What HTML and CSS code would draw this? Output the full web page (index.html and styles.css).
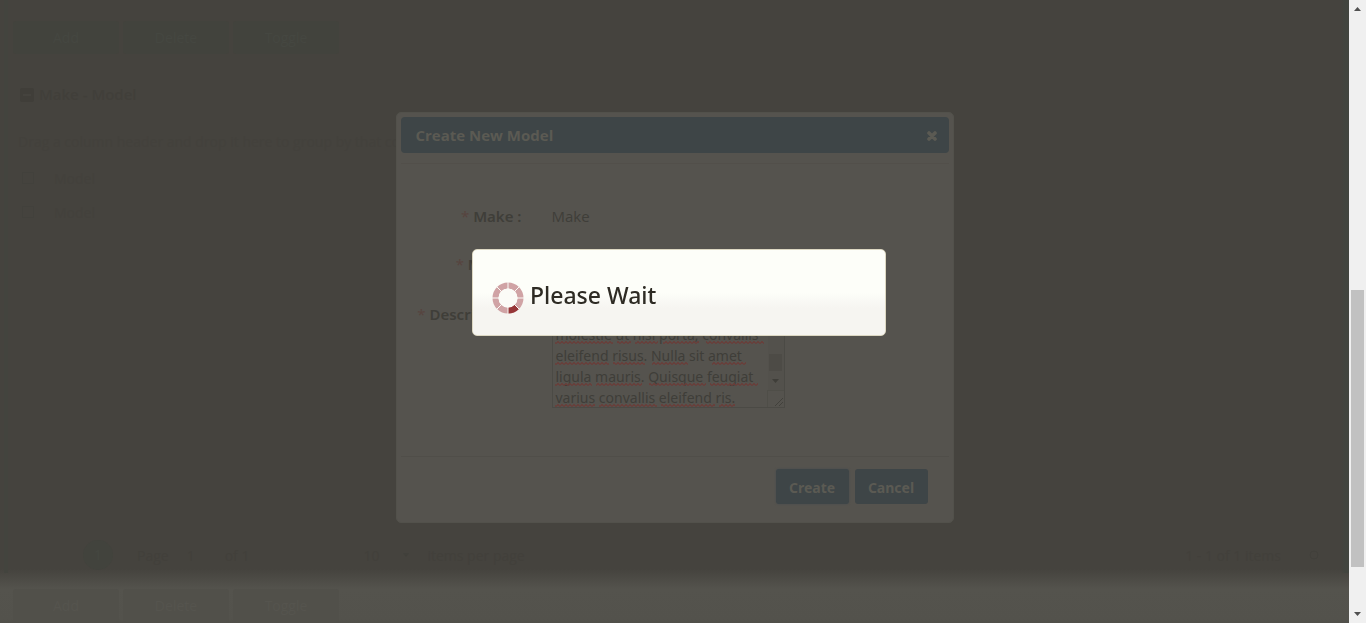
FILE: index.html
```html
<!DOCTYPE html>
<html lang="en">
<head>
<meta charset="utf-8">
<title>Create New Model</title>
<link rel="stylesheet" href="styles.css">
</head>
<body>
<div class="window">
  <main class="page">
    <div class="toolbar">
      <button class="tool" type="button">Add</button>
      <button class="tool" type="button">Delete</button>
      <button class="tool" type="button">Toggle</button>
    </div>
    <h2 class="section-title">
      <svg width="14" height="14" viewBox="0 0 14 14" aria-hidden="true"><rect width="14" height="14" rx="2" fill="#403e39"/><path d="M3 7h8" stroke="#45433e" stroke-width="2"/></svg>
      Make - Model
    </h2>
    <p class="group-hint">Drag a column header and drop it here to group by that column</p>
    <div class="grid-row"><input type="checkbox" aria-label="Select all"><span>Model</span></div>
    <div class="grid-row"><input type="checkbox" aria-label="Select row"><span>Model</span></div>
    <div class="pager">
      <span class="current">1</span>
      <label class="page-label" for="page">Page</label>
      <input class="page-input" id="page" value="1">
      <span class="total">of 1</span>
      <span class="size">10</span>
      <svg class="size-arrow" width="6" height="4" viewBox="0 0 6 4" aria-hidden="true"><path fill="#41403b" d="M0 0h6L3 4z"/></svg>
      <span class="per-page">items per page</span>
      <span class="items">1 - 1 of 1 items</span>
      <svg class="refresh" width="10" height="10" viewBox="0 0 10 10" aria-hidden="true"><circle cx="5" cy="5" r="4" fill="none" stroke="#41403b"/></svg>
    </div>
    <div class="toolbar lower">
      <button class="tool" type="button">Add</button>
      <button class="tool" type="button">Delete</button>
      <button class="tool" type="button">Toggle</button>
    </div>

    <section class="modal" role="dialog" aria-labelledby="modal-title">
      <header class="modal-head">
        <h1 id="modal-title">Create New Model</h1>
        <button class="close" type="button" aria-label="Close"><svg width="10" height="10" viewBox="0 0 10 10" aria-hidden="true"><path d="M2 2l6 6M8 2l-6 6" stroke="#5b5a53" stroke-width="3.600" stroke-linecap="round"/></svg></button>
      </header>
      <form class="form">
        <div class="field"><span class="label"><i>*</i> Make :</span><span class="value">Make</span></div>
        <div class="field"><label class="label" for="model"><i>*</i> Model :</label><input class="text" id="model"></div>
        <div class="field tall"><label class="label" for="description"><i>*</i> Description :</label>
          <div class="area">
            <textarea id="description" spellcheck="false">molestie ut nisi porta, convallis
eleifend risus. Nulla sit amet
ligula mauris. Quisque feugiat
varius convallis eleifend ris.</textarea>
            <svg class="marks" viewBox="0 0 233 106" aria-hidden="true">
              <defs><pattern id="wave" width="4" height="3" patternUnits="userSpaceOnUse"><path d="M0 2.5L2 .5L4 2.5" fill="none" stroke="#6b3c38" stroke-width="1.200"/></pattern></defs>
              <g fill="url(#wave)">
                <path d="M3 39h58v3H3zM65 39h14v3H65zM83 39h23v3H83zM111 39h36v3h-36zM154 39h58v3h-58z"/>
                <path d="M3 60h54v3H3zM61 60h32v3H61zM100 60h36v3h-36zM160 60h34v3h-34z"/>
                <path d="M3 81h37v3H3zM44 81h46v3H44zM97 81h57v3H97zM158 81h48v3h-48z"/>
                <path d="M3 102h40v3H3zM47 102h58v3H47zM109 102h54v3h-54zM167 102h16v3h-16z"/>
              </g>
            </svg>
            <svg class="area-scroll" width="18" height="106" viewBox="0 0 18 106" aria-hidden="true"><path fill="#53514c" d="M1 1h16v88H1z"/><path fill="#4d4b46" d="M2 52h13v17H2z"/><path fill="#3f3e39" d="M5 77h7l-3.500 4z"/><path d="M1 88.500h16M.5 88v17" fill="none" stroke="#4f4e48"/><path d="M8 104l8-8M12 104l4-4" fill="none" stroke="#42413c"/></svg>
          </div>
        </div>
      </form>
      <footer class="modal-foot">
        <button class="action focused" type="button">Create</button>
        <button class="action" type="button">Cancel</button>
      </footer>
    </section>
  </main>

  <div class="scrollbar" aria-hidden="true">
    <svg width="17" height="17" viewBox="0 0 17 17"><path fill="#505050" d="M5 11h7L8.500 7z"/></svg>
    <div class="track"><div class="thumb"></div></div>
    <svg width="17" height="17" viewBox="0 0 17 17"><path fill="#505050" d="M5 6h7l-3.500 4z"/></svg>
  </div>
</div>

<div class="wait" role="status">
  <svg width="32" height="32" viewBox="0 0 32 32" aria-hidden="true">
    <circle cx="16" cy="16" r="12.500" fill="none" stroke="#d0a3a5" stroke-width="6"/>
    <path d="M16 28.500A12.500 12.500 0 0 0 24.840 24.840" fill="none" stroke="#963638" stroke-width="6"/>
    <path d="M16 0v32M0 16h32M4.500 4.500l23 23M27.500 4.500l-23 23" stroke="#fbfaf6"/>
    <circle cx="16" cy="16" r="9.500" fill="#fbfbf7"/>
  </svg>
  <span>Please Wait</span>
</div>
</body>
</html>
```
FILE: styles.css
```css
* { box-sizing: border-box; }
body { margin: 0; font: 15px/21px "Open Sans", "Noto Sans", sans-serif; color: #3f3e39; background: #45433e; }
button, input, textarea { font: inherit; color: inherit; }
.window { display: flex; height: 100vh; overflow: hidden; }
.page {
  position: relative; flex: 1; display: flex; flex-direction: column; padding: 21px 10px 0 13px; overflow: hidden;
  background:
    linear-gradient(90deg, transparent 4px, #43443e 4px, #43443e 8px, transparent 8px) 0 0 / 100% calc(100% - 50px) no-repeat,
    linear-gradient(270deg, #42453f 4px, transparent 8px) 0 0 / 100% calc(100% - 50px) no-repeat,
    linear-gradient(0deg, #504f49 0, #53524c 4px, #54534d 34px, #45433e 54px);
}
.toolbar { display: flex; gap: 4px; }
.tool { width: 106px; height: 33px; padding: 0; border: 0; border-radius: 3px; background: #42433d; color: #454741; font-size: 14px; }
.lower { height: 34px; margin-top: 19px; }
.lower .tool { background: #51504a; color: #55544e; }
.section-title { display: flex; align-items: center; gap: 5px; margin: 30px 0 0 7px; font-size: 15px; font-weight: 600; color: #413f3a; line-height: 21px; }
.group-hint { margin: 26px 0 9px 5px; color: #43413c; font-size: 14px; }
.grid-row { display: flex; align-items: center; gap: 20px; height: 34px; margin-left: 9px; color: #43413c; font-size: 14px; }
.grid-row input { appearance: none; width: 12px; height: 12px; margin: 0; border: 1px solid #42413c; }
.pager { display: flex; align-items: center; height: 30px; margin-top: auto; padding-left: 70px; color: #42403b; font-size: 14px; }
.current { width: 30px; height: 30px; border-radius: 50%; background: #42433d; text-align: center; line-height: 30px; color: #454741; }
.page-label { margin-left: 24px; }
.page-input { width: 30px; margin-left: 14px; padding: 0 4px; border: 0; background: transparent; }
.total { margin-left: 12px; }
.size { margin-left: 114px; }
.size-arrow { margin-left: 24px; }
.per-page { margin-left: 18px; }
.items { margin-left: auto; }
.refresh { margin: 0 20px 0 28px; }

.modal { position: absolute; top: 112px; left: 50%; width: 558px; transform: translateX(-50%); padding: 4px; border: 1px solid #52514b; border-radius: 5px; background: #55534e; }
.modal-head { display: flex; align-items: center; justify-content: space-between; height: 36px; padding: 0 12px 0 15px; border-radius: 4px; background: #3e4547; color: #5b5a53; }
.modal-head h1 { margin: 0; font-size: 15px; font-weight: 700; }
.close { display: flex; padding: 2px 0 0; border: 0; background: none; }
.form { padding: 42px 0 48px; margin-top: 10px; border-top: 1px solid #524f4a; }
.field { display: flex; align-items: flex-start; gap: 30px; height: 48px; }
.tall { height: auto; }
.tall .label { padding-top: 2px; }
.label { width: 121px; text-align: right; font-family: "Noto Sans", sans-serif; font-weight: 600; font-size: 15px; white-space: nowrap; }
.label i { color: #57443f; font-style: normal; font-weight: 400; }
.text { width: 233px; height: 25px; border: 1px solid #4b4a45; background: transparent; }
.area { position: relative; width: 233px; height: 106px; }
.area textarea { display: block; width: 100%; height: 100%; padding: 21px 18px 0 3px; border: 1px solid #4b4a45; background: transparent; resize: none; overflow: hidden; white-space: pre; font: 14px/21px "Noto Sans", sans-serif; outline: 0; }
.marks { position: absolute; inset: 0; pointer-events: none; }
.area-scroll { position: absolute; top: 0; right: 0; }
.modal-foot { display: flex; justify-content: flex-end; gap: 6px; padding: 12px 21px 14px; border-top: 1px solid #504e49; }
.action { height: 35px; width: 73px; padding: 2px 0 0; border: 0; border-radius: 3px; background: #3e4547; color: #5b5a53; font-family: "Noto Sans", sans-serif; font-weight: 700; font-size: 14px; }
.focused { box-shadow: 0 0 2px #444b50; }

.scrollbar { display: flex; flex-direction: column; width: 17px; background: #f0f0f0; }
.track { flex: 1; padding: 273px 2px 39px; }
.thumb { height: 100%; background: #c1c1c1; }

.wait { position: fixed; top: 249px; left: calc(50% - 4px); transform: translateX(-50%); display: flex; align-items: center; gap: 6px; width: 414px; height: 87px; padding: 10px 19px 0; border: 1px solid #ddd8c3; border-radius: 5px; background: linear-gradient(#fdfef9 50%, #f6f5f1 68%); color: #2e2b24; }
.wait span { padding-bottom: 5px; font: 500 23px/30px "Noto Sans", sans-serif; }
```
